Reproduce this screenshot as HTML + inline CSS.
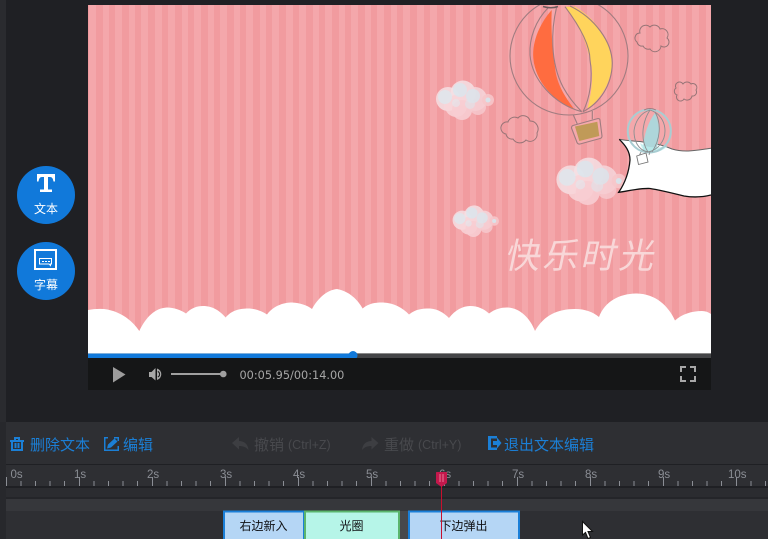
<!DOCTYPE html>
<html>
<head>
<meta charset="utf-8">
<style>
html,body{margin:0;padding:0;width:768px;height:539px;overflow:hidden;background:#1f2024}
svg{display:block}
text{font-family:"Liberation Sans","WenQuanYi Zen Hei","Noto Sans CJK SC",sans-serif}
.b{fill:#1b7fd6;font-size:15px}
.d{fill:#48494d;font-size:15px}
.dl{fill:#48494d;font-size:12.500px}
.t{fill:#8b8e95;font-size:11.500px}
.c{fill:#101114;font-size:12px;text-anchor:middle}
.w{fill:#fff;font-size:12px;text-anchor:middle}
</style>
</head>
<body>
<svg width="768" height="539" viewBox="0 0 768 539" xmlns="http://www.w3.org/2000/svg">
<defs>
<pattern id="st" x="96" y="0" width="131" height="10" patternUnits="userSpaceOnUse">
<rect width="131" height="10" fill="#f4a7ab"/>
<path d="M0 0h7v10h-7zM13 0h6v10h-6zM26 0h7v10h-7zM39 0h6v10h-6zM52 0h7v10h-7zM66 0h6v10h-6zM79 0h7v10h-7zM92 0h6v10h-6zM105 0h7v10h-7zM118 0h6v10h-6z" fill="#f19b9f" shape-rendering="crispEdges"/>
</pattern>
<clipPath id="vc"><rect x="88" y="5" width="623" height="349"/></clipPath>
<g id="sec" stroke="#8b8e95" stroke-width="1" shape-rendering="crispEdges">
<path d="M.5 477V486M15 481V486M29.5 481V486M44 481V486M58.5 481V486"/>
</g>
<g id="fluffy">
<circle cx="-16" cy="-1" r="12" fill="#f5dfe3" opacity=".85"/>
<circle cx="-1" cy="-7" r="12.500" fill="#f4e0e4" opacity=".85"/>
<circle cx="11" cy="-1" r="12" fill="#f5d6da" opacity=".85"/>
<circle cx="-8" cy="6" r="11" fill="#f8d5d8" opacity=".85"/>
<circle cx="-2" cy="10" r="10" fill="#f7cdd1" opacity=".9"/>
<circle cx="14" cy="7" r="8" fill="#f6cbcf" opacity=".8"/>
<circle cx="24" cy="0" r="6" fill="#f6c6ca" opacity=".9"/>
<circle cx="-19" cy="-3" r="7" fill="#dde7ed" opacity=".8"/>
<circle cx="-4" cy="-10" r="7" fill="#d9e6ee" opacity=".8"/>
<circle cx="9" cy="-4" r="7" fill="#d9e5ec" opacity=".8"/>
<circle cx="-8" cy="3" r="4" fill="#e6e4ea" opacity=".7"/>
<circle cx="6" cy="4" r="5" fill="#dfe3ea" opacity=".6"/>
<circle cx="24" cy="0" r="2.500" fill="#d9e3ea"/>
</g>
</defs>

<rect width="768" height="539" fill="#1f2024"/>
<rect x="0" y="0" width="6" height="539" fill="#2a2b2f"/>

<!-- video -->
<rect x="88" y="5" width="623" height="349" fill="url(#st)"/>

<g clip-path="url(#vc)">
<!-- big balloon -->
<path d="M551.700 10C541 22 532 40 533.300 58C535 82 555 102 575 110C564 96 556 82 555 66.700C552 48 551 28 551.700 10Z" fill="#ff6c40"/>
<path d="M565 6.700L575 6.700C595 18 611 40 611.700 63C612 82 600 100 587.300 109C591 95 593 82 591.700 66.700C589 54 586 44 583 36.700C578 26 571 15 565 6.700Z" fill="#ffd45c"/>
<g fill="none" stroke="#a07c80" stroke-width="1.100">
<circle cx="569" cy="56" r="59"/>
<path d="M548 8C536 20 529 38 530 55C532 80 554 104 581.700 111.700"/>
<path d="M570 6C595 18 612 42 612.300 63C612 85 600 103 583 111.700"/>
<path d="M556.700 6.700C551 30 550 62 563 87C569 98 575 105 581.700 111.700"/>
<path d="M565 6.700C578 24 590 44 590 60C593 78 590 98 583 111.700"/>
<path d="M543 6.500Q551 9 558 6.500" stroke="#6d5a5c" stroke-width="1.500"/>
<path d="M573.300 115L577.300 124M592.300 111V119.300"/>
<path d="M573 125.500L598 118.500Q600 118.500 600 120.500L602 136Q602 138 600 138.500L580 144Q578 144.500 577 142.500L571.500 128Q571.500 126 573 125.500Z" fill="#f5a8ab"/>
</g>
<path d="M575 126.500L597.300 121.700L599.300 136L579.300 141Z" fill="#c09a58"/>

<!-- outline clouds -->
<g fill="none" stroke="#8e7072" stroke-width="1" opacity=".9">
<path d="M637 42A5 5 0 0 1 640 33A6 6 0 0 1 650 27A6 6 0 0 1 660 29A6 6 0 0 1 667 38A5 5 0 0 1 661 46A6 6 0 0 1 650 49A6 6 0 0 1 643 46A5 5 0 0 1 637 42Z"/>
<path d="M677 95A4 4 0 0 1 676 88A4 4 0 0 1 683 84A5 5 0 0 1 691 84A4 4 0 0 1 696 90A4 4 0 0 1 692 96A5 5 0 0 1 684 99A4 4 0 0 1 677 95Z"/>
<path d="M506 134A6 6 0 0 1 508 122A7 7 0 0 1 518 118A7 7 0 0 1 530 121A8 8 0 0 1 537 133A7 7 0 0 1 526 140A8 8 0 0 1 513 139A6 6 0 0 1 506 134Z"/>
</g>

<!-- fluffy clouds -->
<use href="#fluffy" transform="translate(464 100)"/>
<use href="#fluffy" transform="translate(590 181) scale(1.200)"/>
<use href="#fluffy" transform="translate(475 221) scale(.8)"/>

<!-- small balloon back -->
<circle cx="649.300" cy="131" r="22" fill="#f4a8ab"/>

<!-- banner -->
<path d="M619.300 139.300C628 141 636 141 643 142C655 143 663 145 672 149C685 153 698 150 711 148.300V195C703 197 693 197.500 684 196C672 193 660 190 650 188.500C640 188 628 191 618.700 192.300C625 183 629 172 630 160C630 151 625 145 619.300 139.300Z" fill="#fff"/>
<path d="M619.300 139.300C628 141 636 141 643 142C655 143 663 145 672 149C685 153 698 150 711 148.300" fill="none" stroke="#666" stroke-width="1"/>
<path d="M711 195C703 197 693 197.500 684 196C672 193 660 190 650 188.500C640 188 628 191 618.700 192.300C625 183 629 172 630 160C630 151 625 145 619.300 139.300" fill="none" stroke="#111" stroke-width="1.300"/>

<!-- small balloon front -->
<path d="M655 113C646 125 643 140 643 152L655 152C661 138 660 124 655 113Z" fill="#aed6da"/>
<path d="M640 143Q649 150 668 146Q660 153 650 153Q643 153 640 143Z" fill="#b8ecec" opacity=".8"/>
<circle cx="649.300" cy="131" r="21.500" fill="none" stroke="#a9cdd2" stroke-width="2"/>
<g fill="none" stroke="#8a8e90" stroke-width=".9">
<path d="M634 131C635 122 640 113 650 110C660 113 665 122 665 131C665 141 658 150 648 152C638 150 634 141 634 131Z"/>
<path d="M650 110C642 122 640 140 648 152M655 112C662 124 660 140 652 152"/>
<path d="M641 152L639.500 155M650 151.500L649 155"/>
<path d="M636.700 156L646 153L648 162L638.500 164.500Z" fill="#fff" stroke="#777"/>
<path d="M644 110Q650 107 656 110" stroke="#a07c80"/>
</g>

<!-- white cloud ground -->
<path d="M88 310Q96 308.500 104 309C120 311 132 320 139.300 331C146 317 155 308 167 307.500C174 307.500 181 310 186 313.500C191 308 197 306 203 306C213 306 220 311 225.600 317.500C232 310 240 308.500 248 308.500C255 308.500 262 311 267 314.500C274 305 285 302.500 292 302.500C300 303 307 305 312 309C318 298 327 290 337 289C349 291 358 300 362.600 308.500C369 303 376 302.500 383 302.500C394 303 403 308 409 314.500C416 309 422 308.500 430 308.500C438 309 444 313 449 318C455 310 463 306 470 306C478 306 484 309 489 313.500C495 309 501 307.500 507 307.500C520 308 530 318 535 331C544 315 558 309 575 309C585 309 593 312 599 317C605 301 620 293.500 637 293.500C655 294 668 305 675 320.500C682 314 692 311 702 311Q707 311 711 314V354H88Z" fill="#fff"/>
</g>

<!-- title text -->
<text x="0" y="0" transform="translate(504 268) skewX(-12)" style="font-size:35px;font-family:'Noto Sans CJK SC',sans-serif;letter-spacing:3px" fill="#f9dadb" opacity=".95">快乐时光</text>

<!-- progress -->
<rect x="88" y="353" width="623" height="5" fill="#444547"/>
<rect x="88" y="353" width="265" height="5" fill="#1179da"/>
<rect x="88" y="353" width="265" height="1" fill="#7fb0dc"/>
<rect x="353" y="353" width="358" height="1" fill="#8a8a8a"/>
<circle cx="353" cy="355.500" r="4.500" fill="#1179da"/>

<!-- controls -->
<rect x="88" y="358" width="623" height="32" fill="#151617"/>
<path d="M113 367V382.500L125.500 374.500Z" fill="#9c9c9c"/>
<path d="M149 372V377H151.500L155.500 380.500V368L151.500 372Z" fill="#a8a8a8"/>
<path d="M157 368.500A6 6 0 0 1 157 380Z" fill="#a8a8a8"/>
<path d="M157.800 371.500A3 3 0 0 1 157.800 377" fill="none" stroke="#151617" stroke-width="1"/>
<rect x="171" y="373" width="52" height="2" fill="#a0a0a0"/>
<circle cx="223.300" cy="374" r="3.300" fill="#a0a0a0"/>
<text x="239.500" y="379" fill="#a6a6a6" style="font-size:11.300px;font-family:'DejaVu Sans',sans-serif">00:05.95/00:14.00</text>
<path d="M686 367H681V372M690 367H695V372M686 381H681V376M690 381H695V376" fill="none" stroke="#a8a8a8" stroke-width="2"/>

<!-- side buttons -->
<circle cx="46" cy="195" r="29" fill="#1179da"/>
<circle cx="46" cy="271" r="29" fill="#1179da"/>
<path d="M37 174H55V181.500H53.500C53 178.500 52 177 50 177H48V189.500H52V192H40V189.500H44V177H42C40 177 39 178.500 38.500 181.500H37Z" fill="#fff"/>
<text x="46" y="213" class="w">文本</text>
<rect x="35" y="250" width="21" height="19" fill="none" stroke="#fff" stroke-width="2"/>
<path d="M39.500 258.500H51.500V264H50.500V265.500L49 264H39.500Z" fill="none" stroke="#fff" stroke-width="1"/>
<path d="M42 261.500H44M45 261.500H47M48 261.500H50" stroke="#fff" stroke-width="1"/>
<text x="46" y="289" class="w">字幕</text>

<!-- bottom panel -->
<rect x="6" y="422" width="762" height="117" fill="#2e2f33"/>
<rect x="0" y="422" width="6" height="117" fill="#27282c"/>

<!-- toolbar -->
<path d="M10 440H24V442H10ZM14 437H20V440H18V439H16V440H14Z" fill="#1b7fd6"/>
<path d="M12 442V450H22V442M15.500 443V448M18.500 443V448" fill="none" stroke="#1b7fd6" stroke-width="2"/>
<text x="30" y="450" class="b">删除文本</text>
<path d="M108 437.750H104.750V450.250H118.250V446M114 437.750H118.250V441" fill="none" stroke="#1b7fd6" stroke-width="1.500"/>
<path d="M107 448.500L108 444.500L114.500 438.500L117.500 441.500L111 447.500Z" fill="#1b7fd6"/>
<text x="123" y="450" class="b">编辑</text>
<path d="M232 443L239 437V441C244 441 248 444 248.500 450C246 447 243 446 239 446V449.500Z" fill="#3d3e42"/>
<text x="254" y="450" class="d">撤销</text>
<text x="288" y="449" class="dl">(Ctrl+Z)</text>
<path d="M378.500 443L371.500 437V441C366.500 441 362.500 444 362 450C364.500 447 367.500 446 371.500 446V449.500Z" fill="#3d3e42"/>
<text x="384" y="450" class="d">重做</text>
<text x="418" y="449" class="dl">(Ctrl+Y)</text>
<path d="M488 436H497V438.500H491V447.500H497V450H488Z" fill="#1b7fd6"/>
<path d="M493 441H497V437.500L501.500 443L497 448.500V445H493Z" fill="#1b7fd6"/>
<text x="504" y="450" class="b">退出文本编辑</text>

<!-- ruler -->
<rect x="6" y="464" width="762" height="1" fill="#1f2024"/>
<g>
<use href="#sec" x="6"/><use href="#sec" x="79"/><use href="#sec" x="152"/><use href="#sec" x="225"/>
<use href="#sec" x="298"/><use href="#sec" x="371"/><use href="#sec" x="444"/><use href="#sec" x="517"/>
<use href="#sec" x="590"/><use href="#sec" x="663"/><use href="#sec" x="736"/>
</g>
<text x="10.500" y="478" class="t">0s</text>
<text x="74" y="478" class="t">1s</text>
<text x="147" y="478" class="t">2s</text>
<text x="220" y="478" class="t">3s</text>
<text x="293" y="478" class="t">4s</text>
<text x="366" y="478" class="t">5s</text>
<text x="439" y="478" class="t">6s</text>
<text x="512" y="478" class="t">7s</text>
<text x="585" y="478" class="t">8s</text>
<text x="658" y="478" class="t">9s</text>
<text x="728" y="478" class="t">10s</text>
<rect x="6" y="486" width="762" height="2" fill="#1f2024"/>
<rect x="6" y="488" width="762" height="9" fill="#2b2c30"/>
<rect x="6" y="497" width="762" height="2" fill="#242529"/>
<rect x="6" y="499" width="762" height="12" fill="#36373b"/>

<!-- clips -->
<rect x="224" y="511.500" width="80" height="30" fill="#b5d6f5" stroke="#1a7fd8" stroke-width="2"/>
<text x="263.500" y="530" class="c">右边新入</text>
<rect x="305" y="511.500" width="94" height="30" fill="#b6f5e8" stroke="#5bb56d" stroke-width="2"/>
<text x="351.500" y="530" class="c">光圈</text>
<rect x="400" y="511" width="8" height="28" fill="#47484b"/>
<rect x="409" y="511.500" width="110" height="30" fill="#b5d6f5" stroke="#1a7fd8" stroke-width="2"/>
<text x="463.500" y="530" class="c">下边弹出</text>

<!-- playhead -->
<rect x="441" y="485" width="1" height="54" fill="#c8102e"/>
<path d="M436 472.500Q436 472 437 472H446Q447 472 447 472.500V483L441.500 487L436 483Z" fill="#c4184c"/>
<path d="M440 474V482M443 474V482" stroke="#e87a98" stroke-width="1"/>

<!-- cursor -->
<path d="M582.500 521.500V535L585.500 532.500L588 538.500L590.500 537.500L588 531.500H592.500Z" fill="#fff" stroke="#111" stroke-width="1"/>
</svg>
</body>
</html>
